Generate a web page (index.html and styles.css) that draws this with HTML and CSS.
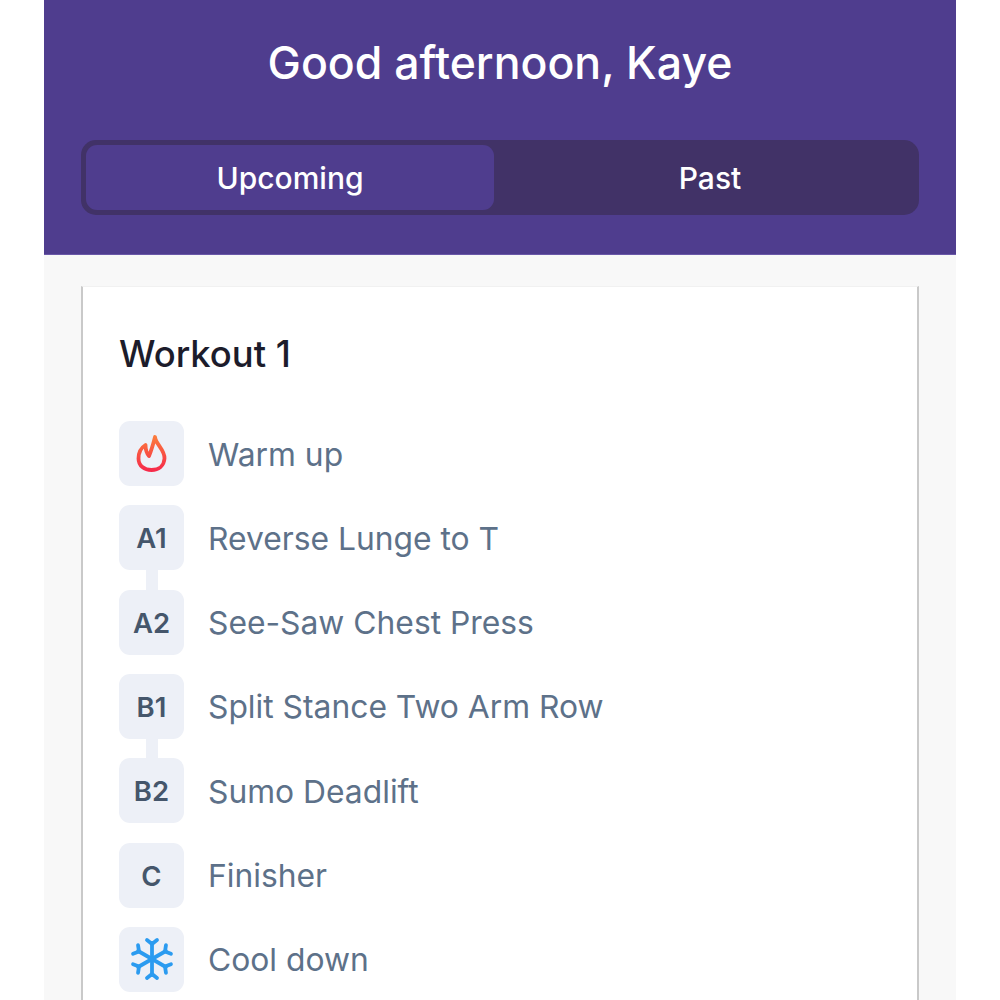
FILE: index.html
```html
<!DOCTYPE html>
<html lang="en">

<head>
    <meta charset="UTF-8">
    <meta name="viewport" content="width=device-width, initial-scale=1.0">
    <title>Workouts</title>
    <link rel="stylesheet" href="styles.css">
</head>

<body>
    <div class="app">
        <header class="top">
            <h1>Good afternoon, Kaye</h1>
            <div class="tabs">
                <div class="tab active">Upcoming</div>
                <div class="tab">Past</div>
            </div>
        </header>

        <main class="content">
            <section class="card">
                <h2>Workout 1</h2>
                <ul class="list">
                    <li class="row">
                        <div class="badge">
                            <svg width="65" height="65" viewBox="0 0 65 65" fill="none">
                                <defs>
                                    <linearGradient id="fire" x1="0" y1="0" x2="0" y2="1">
                                        <stop offset="0" stop-color="#fb7a3c" />
                                        <stop offset="1" stop-color="#f62b4a" />
                                    </linearGradient>
                                </defs>
                                <path d="M36 16C36.500 23 46 29 45.500 37.500C45 45 39.500 49 32.500 49C25.500 49 19.500 45 19.500 37.500C19.500 31 22.500 26.500 26.500 24C26.500 28 27.500 32 30 35C32.500 29 34.500 22 36 16Z" stroke="url(#fire)" stroke-width="3.800" stroke-linejoin="round" />
                            </svg>
                        </div>
                        <span>Warm up</span>
                    </li>
                    <li class="row linked">
                        <div class="badge">A1</div>
                        <span>Reverse Lunge to T</span>
                    </li>
                    <li class="row">
                        <div class="badge">A2</div>
                        <span>See-Saw Chest Press</span>
                    </li>
                    <li class="row linked">
                        <div class="badge">B1</div>
                        <span>Split Stance Two Arm Row</span>
                    </li>
                    <li class="row">
                        <div class="badge">B2</div>
                        <span>Sumo Deadlift</span>
                    </li>
                    <li class="row">
                        <div class="badge">C</div>
                        <span>Finisher</span>
                    </li>
                    <li class="row">
                        <div class="badge">
                            <svg width="44" height="44" viewBox="0 0 44 44" fill="none" stroke="#2b9bf0" stroke-width="3.800" stroke-linecap="round" stroke-linejoin="round">
                                <path d="M22 6V38" />
                                <path d="M17 3L22 7L27 3" />
                                <path d="M17 41L22 37L27 41" />
                                <g transform="rotate(60 22 22)">
                                    <path d="M22 6V38" />
                                    <path d="M17 3L22 7L27 3" />
                                    <path d="M17 41L22 37L27 41" />
                                </g>
                                <g transform="rotate(120 22 22)">
                                    <path d="M22 6V38" />
                                    <path d="M17 3L22 7L27 3" />
                                    <path d="M17 41L22 37L27 41" />
                                </g>
                            </svg>
                        </div>
                        <span>Cool down</span>
                    </li>
                </ul>
            </section>
        </main>
    </div>
</body>

</html>
```

FILE: styles.css
```css
* {
    margin: 0;
    padding: 0;
    box-sizing: border-box;
}

html,
body {
    height: 1000px;
    overflow: hidden;
    background-color: #fff;
}

body {
    font-family: Inter, "Liberation Sans", sans-serif;
}

.app {
    width: 912px;
    height: 1000px;
    margin-left: 44px;
    overflow: hidden;
    background-color: #f8f8f8;
}

.top {
    height: 255px;
    padding: 37px 37px 0;
    background-color: #4f3d8e;
    border-bottom: 1px solid #6a58a8;
}

h1 {
    height: 53px;
    margin-bottom: 50px;
    color: #fff;
    font-size: 44.600px;
    font-weight: 500;
    line-height: 53px;
    text-align: center;
}

.tabs {
    display: flex;
    height: 75px;
    padding: 5px;
    border-radius: 15px;
    background-color: #413267;
}

.tab {
    display: flex;
    align-items: center;
    justify-content: center;
    flex: 1;
    padding: 0 0 0 12px;
    color: #fff;
    font-size: 30px;
    font-weight: 500;
    border-radius: 11px;
}

.tab.active {
    flex: none;
    width: 408px;
    padding-left: 0;
    background-color: #4f3d8e;
}

.content {
    padding: 31px 37px 0;
}

.card {
    height: 800px;
    padding: 45px 36px 0;
    background-color: #fff;
    border-left: 2px solid #c9c9c9;
    border-right: 2px solid #c9c9c9;
    border-top: 1px solid #f1f1f1;
}

h2 {
    height: 44px;
    margin-bottom: 45px;
    color: #1c1c2b;
    font-size: 36.400px;
    font-weight: 500;
    line-height: 44px;
}

.list {
    display: flex;
    flex-direction: column;
    gap: 19.330px;
    list-style: none;
}

.row {
    position: relative;
    display: flex;
    align-items: center;
    gap: 24px;
    color: #5d7189;
    font-size: 31.800px;
}

.row span {
    padding-top: 1px;
}

.linked::after {
    content: "";
    position: absolute;
    left: 27px;
    top: 64px;
    width: 12px;
    height: 22px;
    background-color: #edf0f7;
}

.badge {
    display: flex;
    align-items: center;
    justify-content: center;
    flex: none;
    width: 65px;
    height: 65px;
    padding-top: 1px;
    color: #45566b;
    font-size: 27.500px;
    font-weight: 600;
    border-radius: 11px;
    background-color: #edf0f7;
}

.badge svg {
    margin-top: -1px;
}
```
